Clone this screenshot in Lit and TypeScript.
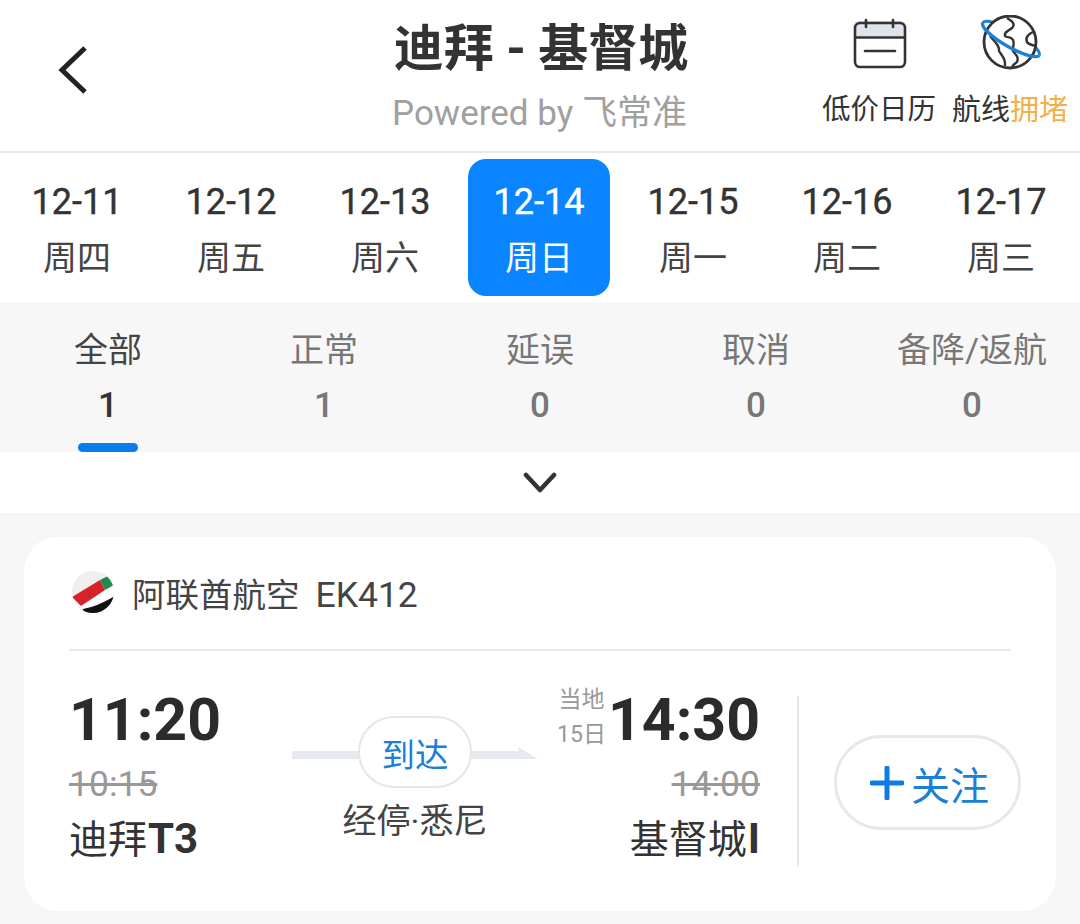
import { LitElement, html, css } from "lit";
import { customElement } from "lit/decorators.js";

const dates = [
  ["12-11", "周四"], ["12-12", "周五"], ["12-13", "周六"], ["12-14", "周日"],
  ["12-15", "周一"], ["12-16", "周二"], ["12-17", "周三"],
];
const tabs = [["全部", "1"], ["正常", "1"], ["延误", "0"], ["取消", "0"], ["备降/返航", "0"]];

@customElement("app-root")
export class AppRoot extends LitElement {
  static styles = css`
    :host {
      display: block;
      width: 1080px;
      height: 924px;
      overflow: hidden;
      background: #f6f6f6;
      color: #333;
      font-family: Roboto, "Noto Sans CJK SC", sans-serif;
    }
    .header {
      height: 153px;
      box-sizing: border-box;
      background: #fff;
      border-bottom: 2px solid #e9e9e9;
      display: grid;
      grid-template-columns: 1fr auto 1fr;
    }
    .back { display: flex; align-items: flex-start; padding: 45px 0 0 58px; }
    .back svg { display: block; }
    .titles { display: flex; flex-direction: column; align-items: center; padding: 16px 0 0 2px; }
    .title { font-size: 50px; line-height: 66px; font-weight: 700; color: #333; white-space: pre; }
    .sub { font-size: 35px; line-height: 44px; color: #a0a0a0; margin: 10px 0 0 -3px; white-space: nowrap; }
    .actions { display: flex; justify-content: flex-end; gap: 16px; padding: 15px 12px 0 0; }
    .action { display: flex; flex-direction: column; align-items: center; }
    .action svg { display: block; height: 62px; width: 70px; }
    .action span { font-size: 28.5px; line-height: 40px; margin-top: 13px; color: #333; white-space: nowrap; }
    .action.route-state span { font-size: 29px; }
    .action em { font-style: normal; color: #f2b049; }

    .dates { height: 149px; background: #fff; display: grid; grid-template-columns: repeat(7, 154px); }
    .date { display: flex; flex-direction: column; align-items: center; padding-top: 6px; }
    .date .inner {
      width: 142px; height: 137px; border-radius: 18px;
      display: flex; flex-direction: column; align-items: center; color: #333;
    }
    .date .inner.on { background: #0a84ff; color: #fff; }
    .date .d { font-size: 36px; line-height: 44px; margin-top: 21px; -webkit-text-stroke: 0.4px currentColor; }
    .date .w { font-size: 34px; line-height: 44px; margin-top: 12px; color: #444; }
    .date .on .w { color: #fff; }

    .tabs { height: 150px; background: #f7f7f7; display: grid; grid-template-columns: repeat(5, 216px); }
    .tab { display: flex; flex-direction: column; align-items: center; color: #777; }
    .tab .n { font-size: 34px; line-height: 44px; margin-top: 26px; white-space: nowrap; }
    .tab .c { font-size: 35px; line-height: 44px; margin-top: 12px; font-weight: 500; color: #777; }
    .tab.on .n { color: #444; }
    .tab.on .c { color: #333; }
    .bar { width: 60px; height: 9px; border-radius: 5px; background: #0a7cf0; margin-top: 15px; }

    .more { height: 61px; background: #fff; display: flex; justify-content: center; align-items: center; }
    .more svg { display: block; }

    .card {
      margin: 24px 24px 0;
      height: 374px;
      background: #fff;
      border-radius: 34px;
      padding: 0 45px;
      box-sizing: border-box;
    }
    .airline {
      height: 114px;
      box-sizing: border-box;
      padding: 0 0 2px 2px;
      display: flex; align-items: center; gap: 17px;
      border-bottom: 2px solid #e9e9e9;
      font-size: 33.5px; color: #444;
    }
    .airline svg { display: block; flex: none; }
    .airline b { font-weight: 400; font-size: 35.5px; margin-left: 16px; }
    .row { display: flex; align-items: flex-start; padding-top: 45px; }
    .dep { width: 223px; flex: none; }
    .time { font-size: 59px; line-height: 46px; font-weight: 700; color: #2b2b2b; padding-top: 1px; }
    .old { font-size: 35.5px; line-height: 44px; color: #999; text-decoration: line-through; margin-top: 19px; }
    .port { font-size: 39px; line-height: 50px; color: #333; margin-top: 8px; white-space: nowrap; }
    .port b { font-weight: 700; font-size: 42px; margin-left: 1px; }
    .route { width: 246px; flex: none; display: flex; flex-direction: column; align-items: center; padding-top: 20px; position: relative; }
    .arrow { position: absolute; left: 0; top: 49px; display: block; }
    .pill {
      position: relative; width: 114px; height: 72px; box-sizing: border-box;
      background: #fff; border: 2px solid #e6e6e6; border-radius: 36px;
      display: flex; align-items: center; justify-content: center;
      font-size: 33.5px; color: #1b7fd6;
    }
    .via { font-size: 34px; line-height: 46px; color: #444; margin-top: 10px; white-space: nowrap; }
    .arr { width: 222px; flex: none; display: flex; flex-direction: column; align-items: flex-end; }
    .arr .top { display: flex; align-items: center; gap: 2px; height: 47px; }
    .note { display: flex; flex-direction: column; align-items: center; font-size: 23px; line-height: 35px; color: #999; margin-top: -6px; white-space: nowrap; }
    .side { flex: none; margin-left: 37px; width: 2px; height: 170px; background: #e6e6e6; }
    .follow {
      flex: none;
      margin: 39px 0 0 35px; width: 187px; height: 95px; box-sizing: border-box;
      border: 3px solid #e8e8e8; border-radius: 48px; padding-left: 4px;
      display: flex; align-items: center; justify-content: center; gap: 7px;
      font-size: 39px; color: #1b7fd6; white-space: nowrap;
    }
    .follow svg { display: block; }
  `;

  private logo() {
    return html`<svg width="44" height="44" viewBox="0 0 44 44">
      <defs><clipPath id="lc"><circle cx="22" cy="22" r="21"></circle></clipPath></defs>
      <g clip-path="url(#lc)">
        <rect width="44" height="44" fill="#efefef"></rect>
        <path d="M2 27 L29 10 L44 14 L44 30 L12 40 Z" fill="#fff"></path>
        <path d="M29 10 L39 5 L43 15 L34 20 Z" fill="#1f8a4c"></path>
        <path d="M1 27 L29 10 L34 20 L10 36 Z" fill="#d4242a"></path>
        <path d="M10 44 L12 39 Q26 37 44 26 L44 44 Z" fill="#111"></path>
      </g>
    </svg>`;
  }

  private calendar() {
    return html`<svg viewBox="0 0 70 62">
      <path d="M12 6 H59 Q60 6 61 8 V22 H11 V8 Q11 6 12 6Z" fill="#dfe4ec"></path>
      <rect x="11" y="8" width="50" height="44" rx="5" fill="none" stroke="#333" stroke-width="2.6"></rect>
      <path d="M11 22.5H61" stroke="#333" stroke-width="2.4"></path>
      <path d="M22 5V12M49 5V12" stroke="#333" stroke-width="2.6" stroke-linecap="round"></path>
      <path d="M21 36H51" stroke="#333" stroke-width="2.6" stroke-linecap="round"></path>
    </svg>`;
  }

  private globe() {
    return html`<svg viewBox="0 0 70 62">
      <g transform="translate(36 24) rotate(30)">
        <path d="M-32.5 0 A32.5 8 0 0 1 32.5 0" fill="none" stroke="#1f7fd8" stroke-width="3"></path>
      </g>
      <circle cx="35" cy="27" r="26" fill="#fff" stroke="#333" stroke-width="2.8"></circle>
      <path d="M32 3 C37 6 41 9 37 13 C33 16 29 17 30 21 C32 23 36 21 38 25 C40 29 37 33 38 36 C41 40 44 42 42 47 C39 49 38 50 37 52"
        fill="none" stroke="#333" stroke-width="2.4"></path>
      <path d="M15 21 C20 27 25 31 24 36 C27 41 31 44 30 51" fill="none" stroke="#333" stroke-width="2.4"></path>
      <path d="M58 17 C53 19 50 23 52 27 C54 30 58 30 60 31" fill="none" stroke="#333" stroke-width="2.4"></path>
      <g transform="translate(36 24) rotate(30)">
        <path d="M-32.5 0 A32.5 8 0 0 0 32.5 0" fill="none" stroke="#1f7fd8" stroke-width="3.4"></path>
      </g>
    </svg>`;
  }

  render() {
    return html`
      <div class="header">
        <div class="back">
          <svg width="32" height="50" viewBox="0 0 32 50"><path d="M27 3 L4 25 L27 47" fill="none" stroke="#222" stroke-width="5" stroke-linejoin="miter"></path></svg>
        </div>
        <div class="titles">
          <div class="title">迪拜 - 基督城</div>
          <div class="sub">Powered by 飞常准</div>
        </div>
        <div class="actions">
          <div class="action">${this.calendar()}<span>低价日历</span></div>
          <div class="action route-state">${this.globe()}<span>航线<em>拥堵</em></span></div>
        </div>
      </div>
      <div class="dates">
        ${dates.map(([d, w], i) => html`<div class="date"><div class="inner ${i === 3 ? "on" : ""}"><div class="d">${d}</div><div class="w">${w}</div></div></div>`)}
      </div>
      <div class="tabs">
        ${tabs.map(([n, c], i) => html`<div class="tab ${i === 0 ? "on" : ""}"><div class="n">${n}</div><div class="c">${c}</div>${i === 0 ? html`<div class="bar"></div>` : ""}</div>`)}
      </div>
      <div class="more">
        <svg width="34" height="22" viewBox="0 0 34 22"><path d="M3 3 L17 18 L31 3" fill="none" stroke="#333" stroke-width="4.5" stroke-linecap="round" stroke-linejoin="round"></path></svg>
      </div>
      <div class="card">
        <div class="airline">${this.logo()}<span>阿联酋航空<b>EK412</b></span></div>
        <div class="row">
          <div class="dep">
            <div class="time">11:20</div>
            <div class="old">10:15</div>
            <div class="port">迪拜<b>T3</b></div>
          </div>
          <div class="route">
            <svg class="arrow" width="246" height="16" viewBox="0 0 246 16"><path d="M0 6H227L226 2L246 14H0Z" fill="#e6e9ed"></path></svg>
            <div class="pill">到达</div>
            <div class="via">经停·悉尼</div>
          </div>
          <div class="arr">
            <div class="top">
              <div class="note"><span>当地</span><span>15日</span></div>
              <div class="time">14:30</div>
            </div>
            <div class="old">14:00</div>
            <div class="port">基督城<b>I</b></div>
          </div>
          <div class="side"></div>
          <div class="follow">
            <svg width="34" height="34" viewBox="0 0 34 34"><path d="M17 2V32M2 17H32" stroke="#0f7ae5" stroke-width="5" stroke-linecap="round"></path></svg>
            <span>关注</span>
          </div>
        </div>
      </div>
    `;
  }
}
